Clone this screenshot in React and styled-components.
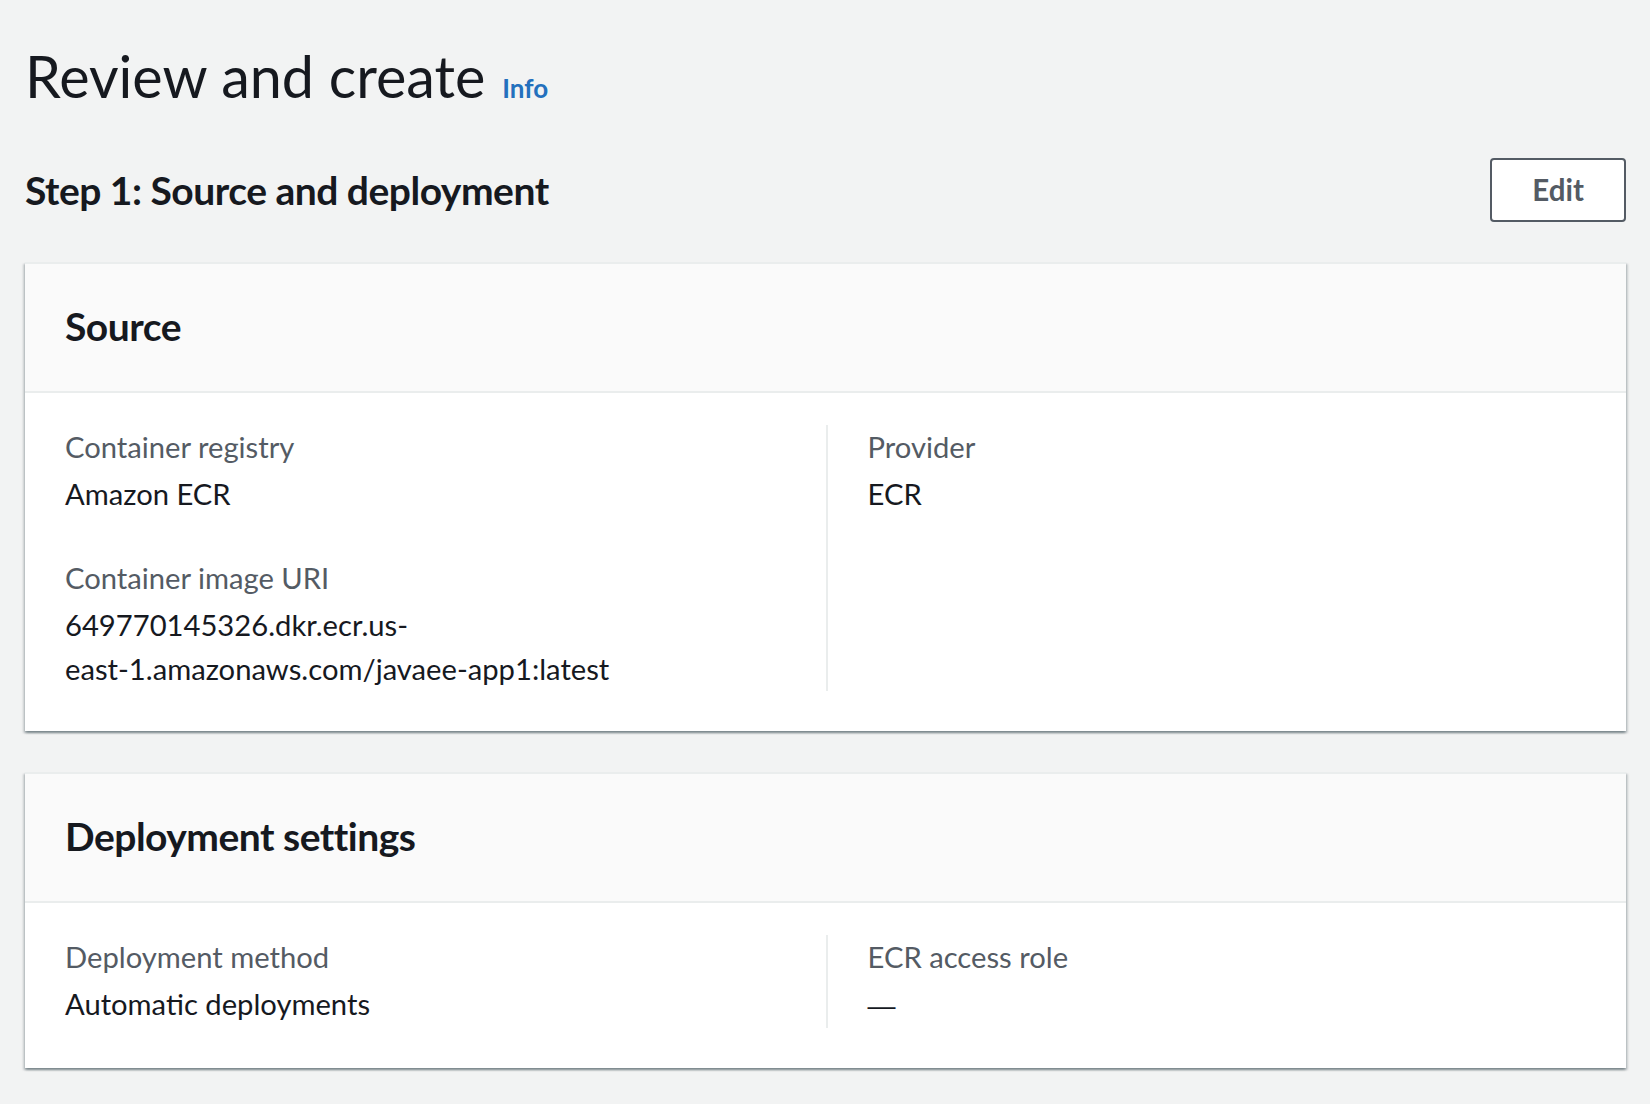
import React from "react";
import styled, { createGlobalStyle } from "styled-components";

const GlobalStyle = createGlobalStyle`
  html, body {
    margin: 0;
    padding: 0;
    background: #f2f3f3;
  }
  body {
    font-family: Lato, "Open Sans", Arial, sans-serif;
    color: #16191f;
    -webkit-font-smoothing: antialiased;
  }
`;

const Page = styled.main`
  padding: 40px 24px 40px 25px;
  box-sizing: border-box;
  width: 1650px;
`;

const TitleRow = styled.div`
  display: flex;
  align-items: baseline;
  gap: 17px;
`;

const Title = styled.h1`
  margin: 0;
  font-size: 57.5px;
  line-height: 72px;
  font-weight: 400;
  color: #16191f;
`;

const InfoLink = styled.a`
  font-size: 26px;
  font-weight: 700;
  color: #2470bd;
  text-decoration: none;
  cursor: pointer;
`;

const StepRow = styled.div`
  display: flex;
  align-items: center;
  justify-content: space-between;
  margin-top: 46px;
  margin-bottom: 40px;
`;

const StepHeading = styled.h2`
  margin: 0;
  font-size: 39px;
  letter-spacing: -0.5px;
  line-height: 52px;
  font-weight: 700;
  color: #16191f;
`;

const Button = styled.button`
  font-family: inherit;
  font-size: 29.5px;
  line-height: 46px;
  font-weight: 700;
  color: #545b64;
  background: #ffffff;
  border: 2px solid #545b64;
  border-radius: 4px;
  padding: 7px 40px;
  cursor: pointer;
`;

const Stack = styled.div`
  display: flex;
  flex-direction: column;
  gap: 41px;
`;

const Card = styled.section`
  background: #ffffff;
  border-top: 2px solid #eaeded;
  box-shadow: 0 2px 2px 0 rgba(0, 28, 36, 0.3),
    2px 2px 2px 0 rgba(0, 28, 36, 0.15),
    -2px 2px 2px 0 rgba(0, 28, 36, 0.15);
`;

const CardHeader = styled.header`
  background: #fafafa;
  border-bottom: 2px solid #eaeded;
  padding: 36px 40px 39px;
`;

const CardTitle = styled.h2`
  margin: 0;
  font-size: 39px;
  letter-spacing: -0.5px;
  line-height: 52px;
  font-weight: 700;
  color: #16191f;
`;

const CardBody = styled.div`
  padding: 32px 40px 40px;
  display: grid;
  grid-template-columns: 1fr 1fr;
`;

const Column = styled.div`
  display: flex;
  flex-direction: column;
  gap: 40px;
  ${(p) =>
    p.$divided &&
    `
    border-left: 2px solid #eaeded;
    padding-left: 40px;
  `}
`;

const Pair = styled.div`
  display: flex;
  flex-direction: column;
  gap: 3px;
`;

const Label = styled.div`
  font-size: 29.2px;
  line-height: 44px;
  color: #545b64;
`;

const Value = styled.div`
  font-size: 29.2px;
  line-height: 44px;
  color: #16191f;
  max-width: 580px;
`;

const Dash = styled.span`
  font-family: "Liberation Sans", Arial, sans-serif;
  font-size: 28px;
`;

function KeyValue({ label, children }) {
  return (
    <Pair>
      <Label>{label}</Label>
      <Value>{children}</Value>
    </Pair>
  );
}

export default function App() {
  return (
    <>
      <GlobalStyle />
      <Page>
        <TitleRow>
          <Title>Review and create</Title>
          <InfoLink>Info</InfoLink>
        </TitleRow>
        <StepRow>
          <StepHeading>Step 1: Source and deployment</StepHeading>
          <Button>Edit</Button>
        </StepRow>
        <Stack>
          <Card>
            <CardHeader>
              <CardTitle>Source</CardTitle>
            </CardHeader>
            <CardBody>
              <Column>
                <KeyValue label="Container registry">Amazon ECR</KeyValue>
                <KeyValue label="Container image URI">
                  649770145326.dkr.ecr.us-
                  <br />
                  east-1.amazonaws.com/javaee-app1:latest
                </KeyValue>
              </Column>
              <Column $divided>
                <KeyValue label="Provider">ECR</KeyValue>
              </Column>
            </CardBody>
          </Card>
          <Card>
            <CardHeader>
              <CardTitle>Deployment settings</CardTitle>
            </CardHeader>
            <CardBody>
              <Column>
                <KeyValue label="Deployment method">Automatic deployments</KeyValue>
              </Column>
              <Column $divided>
                <KeyValue label="ECR access role">
                  <Dash>—</Dash>
                </KeyValue>
              </Column>
            </CardBody>
          </Card>
        </Stack>
      </Page>
    </>
  );
}
